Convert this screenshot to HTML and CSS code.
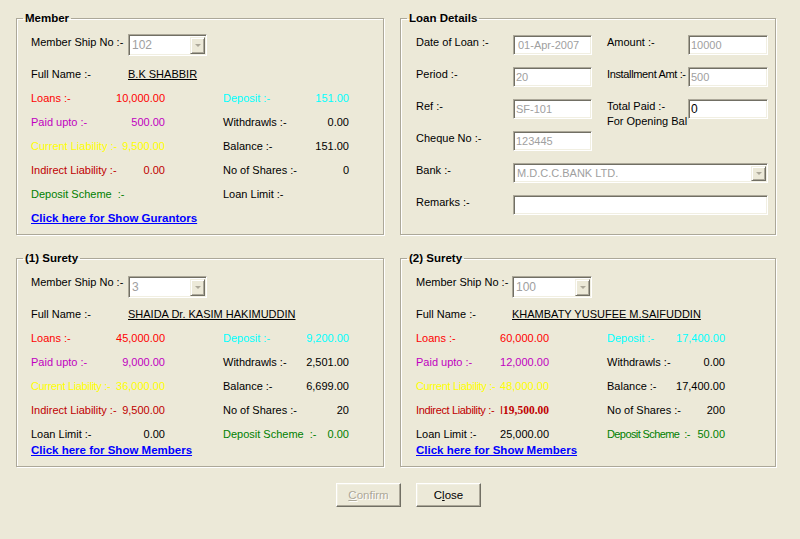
FILE: index.html
```html
<!DOCTYPE html>
<html>
<head>
<meta charset="utf-8">
<title>Loan Details</title>
<link rel="stylesheet" href="styles.css">
</head>
<body>
<div class="form">
  <div class="panels">
    <fieldset class="group">
      <legend>Member</legend>
      <div class="body body-member">
        <div class="combo-row combo-row-member">
          <span class="lbl w97 up1">Member Ship No :-</span>
          <div class="combo w79"><span class="combo-text">102</span><span class="drop"><span class="arrow"></span></span></div>
        </div>
        <div class="name-row"><span class="lbl w97">Full Name :-</span><span class="name">B.K SHABBIR</span></div>
        <div class="data">
          <div class="pair p1 red"><span class="k">Loans :-</span><span class="v">10,000.00</span></div>
          <div class="pair p2 cyan"><span class="k">Deposit :-</span><span class="v">151.00</span></div>
        </div>
        <div class="data">
          <div class="pair p1 magenta"><span class="k">Paid upto :-</span><span class="v">500.00</span></div>
          <div class="pair p2"><span class="k">Withdrawls :-</span><span class="v">0.00</span></div>
        </div>
        <div class="data">
          <div class="pair p1 yellow"><span class="k">Current Liability :-</span><span class="v">9,500.00</span></div>
          <div class="pair p2"><span class="k">Balance :-</span><span class="v">151.00</span></div>
        </div>
        <div class="data">
          <div class="pair p1 darkred"><span class="k">Indirect Liability :-</span><span class="v">0.00</span></div>
          <div class="pair p2"><span class="k">No of Shares :-</span><span class="v">0</span></div>
        </div>
        <div class="data">
          <div class="pair p1 green"><span class="k">Deposit Scheme  :-</span><span class="v"></span></div>
          <div class="pair p2"><span class="k">Loan Limit :-</span><span class="v"></span></div>
        </div>
        <a class="link link-member" href="#">Click here for Show Gurantors</a>
      </div>
    </fieldset>

    <fieldset class="group">
      <legend>Loan Details</legend>
      <div class="body body-loan">
        <span class="lbl c1 r1">Date of Loan :-</span>
        <div class="tb c2 r1 pad3">01-Apr-2007</div>
        <span class="lbl c4 r1">Amount :-</span>
        <div class="tb c5 r1">10000</div>

        <span class="lbl c1 r2">Period :-</span>
        <div class="tb c2 r2">20</div>
        <span class="lbl c4 r2 tight">Installment Amt :-</span>
        <div class="tb c5 r2">500</div>

        <span class="lbl c1 r3">Ref :-</span>
        <div class="tb c2 r3">SF-101</div>
        <span class="lbl c4 r3 two">Total Paid :-<br>For Opening Bal</span>
        <div class="tb c5 r3 enabled">0</div>

        <span class="lbl c1 r4">Cheque No :-</span>
        <div class="tb c2 r4">123445</div>

        <span class="lbl c1 r5">Bank :-</span>
        <div class="combo wide r5"><span class="combo-text">M.D.C.C.BANK LTD.</span><span class="drop"><span class="arrow"></span></span></div>

        <span class="lbl c1 r6">Remarks :-</span>
        <div class="tb wide r6 enabled"></div>
      </div>
    </fieldset>

    <fieldset class="group">
      <legend>(1) Surety</legend>
      <div class="body body-surety">
        <div class="combo-row combo-row-surety">
          <span class="lbl w97 upm1">Member Ship No :-</span>
          <div class="combo w79"><span class="combo-text">3</span><span class="drop"><span class="arrow"></span></span></div>
        </div>
        <div class="name-row"><span class="lbl w97">Full Name :-</span><span class="name">SHAIDA Dr. KASIM HAKIMUDDIN</span></div>
        <div class="data">
          <div class="pair p1 red"><span class="k">Loans :-</span><span class="v">45,000.00</span></div>
          <div class="pair p2 cyan"><span class="k">Deposit :-</span><span class="v">9,200.00</span></div>
        </div>
        <div class="data">
          <div class="pair p1 magenta"><span class="k">Paid upto :-</span><span class="v">9,000.00</span></div>
          <div class="pair p2"><span class="k">Withdrawls :-</span><span class="v">2,501.00</span></div>
        </div>
        <div class="data">
          <div class="pair p1 yellow"><span class="k tight">Current Liability :-</span><span class="v">36,000.00</span></div>
          <div class="pair p2"><span class="k">Balance :-</span><span class="v">6,699.00</span></div>
        </div>
        <div class="data">
          <div class="pair p1 darkred"><span class="k">Indirect Liability :-</span><span class="v">9,500.00</span></div>
          <div class="pair p2"><span class="k">No of Shares :-</span><span class="v">20</span></div>
        </div>
        <div class="data">
          <div class="pair p1"><span class="k">Loan Limit :-</span><span class="v">0.00</span></div>
          <div class="pair p2 green"><span class="k">Deposit Scheme  :-</span><span class="v">0.00</span></div>
        </div>
        <a class="link link-surety" href="#">Click here for Show Members</a>
      </div>
    </fieldset>

    <fieldset class="group">
      <legend>(2) Surety</legend>
      <div class="body body-surety s2">
        <div class="combo-row combo-row-surety">
          <span class="lbl w96 upm1">Member Ship No :-</span>
          <div class="combo w80"><span class="combo-text">100</span><span class="drop"><span class="arrow"></span></span></div>
        </div>
        <div class="name-row"><span class="lbl w96">Full Name :-</span><span class="name">KHAMBATY YUSUFEE M.SAIFUDDIN</span></div>
        <div class="data">
          <div class="pair p1 red"><span class="k">Loans :-</span><span class="v">60,000.00</span></div>
          <div class="pair p2 cyan"><span class="k">Deposit :-</span><span class="v">17,400.00</span></div>
        </div>
        <div class="data">
          <div class="pair p1 magenta"><span class="k">Paid upto :-</span><span class="v">12,000.00</span></div>
          <div class="pair p2"><span class="k">Withdrawls :-</span><span class="v">0.00</span></div>
        </div>
        <div class="data">
          <div class="pair p1 yellow"><span class="k tight">Current Liability :-</span><span class="v">48,000.00</span></div>
          <div class="pair p2"><span class="k">Balance :-</span><span class="v">17,400.00</span></div>
        </div>
        <div class="data">
          <div class="pair p1 darkred"><span class="k tight">Indirect Liability :-</span><span class="v">I<span class="serifb">19,500.00</span></span></div>
          <div class="pair p2"><span class="k">No of Shares :-</span><span class="v">200</span></div>
        </div>
        <div class="data">
          <div class="pair p1"><span class="k">Loan Limit :-</span><span class="v">25,000.00</span></div>
          <div class="pair p2 green"><span class="k tighter">Deposit Scheme  :-</span><span class="v">50.00</span></div>
        </div>
        <a class="link link-surety" href="#">Click here for Show Members</a>
      </div>
    </fieldset>
  </div>

  <div class="buttons">
    <button class="btn disabled" type="button"><u>C</u>onfirm</button>
    <button class="btn" type="button">C<u>l</u>ose</button>
  </div>
</div>
</body>
</html>
```

FILE: styles.css
```css
html, body {
  margin: 0;
  padding: 0;
}

body {
  width: 800px;
  height: 539px;
  overflow: hidden;
  background: #ECE9D8;
  font-family: "Liberation Sans", Arial, sans-serif;
  font-size: 11px;
  color: #000;
}

.form {
  padding: 12px 0 0 16px;
}

.panels {
  display: grid;
  grid-template-columns: 368px 376px;
  grid-template-rows: 223px 215px;
  column-gap: 16px;
  row-gap: 17px;
}

.group {
  margin: 0;
  padding: 0;
  min-width: 0;
  border: 1px solid #ACA899;
  box-shadow: inset 1px 1px 0 #FFFFFF, 1px 1px 0 #FFFFFF;
  box-sizing: border-box;
}

.group legend {
  margin-left: 6px;
  padding: 0 2px;
  font-weight: bold;
  font-size: 11.5px;
  line-height: 12px;
  color: #000;
}

.body {
  padding-left: 14px;
}

.body-member {
  padding-top: 10px;
}

.body-surety {
  padding-top: 12px;
}

.s2 {
  padding-left: 15px;
}

.lbl {
  white-space: pre;
  line-height: 14px;
}

.w97 { width: 97px; flex: none; }
.w96 { width: 96px; flex: none; }

.combo-row {
  display: flex;
  align-items: flex-start;
}

.combo-row-member { height: 28px; }
.combo-row-surety { height: 26px; }

.up1 { margin-top: 1px; }
.upm1 { margin-top: -1px; }

.combo {
  box-sizing: border-box;
  height: 22px;
  display: flex;
  align-items: stretch;
  border: 1px solid;
  border-color: #ACA899 #FFFFFF #FFFFFF #ACA899;
  box-shadow: inset 1px 1px 0 #716F64, inset -1px -1px 0 #F1EFE2;
  background: #FFFFFF;
  padding: 2px 1px 1px 2px;
}

.w79 { width: 79px; }
.w80 { width: 80px; }

.combo-text {
  flex: 1;
  color: #A0A0A0;
  font-size: 12px;
  line-height: 17px;
  padding-left: 1px;
  white-space: nowrap;
  overflow: hidden;
}

.drop {
  flex: none;
  width: 15px;
  box-sizing: border-box;
  background: #ECE9D8;
  border: 1px solid;
  border-color: #F1EFE2 #716F64 #716F64 #F1EFE2;
  box-shadow: inset 1px 1px 0 #FFFFFF, inset -1px -1px 0 #ACA899;
  display: flex;
  align-items: center;
  justify-content: center;
}

.arrow {
  width: 0;
  height: 0;
  border-left: 3px solid transparent;
  border-right: 3px solid transparent;
  border-top: 3px solid #ACA899;
}

.name-row {
  display: flex;
  height: 24px;
  line-height: 24px;
}

.name-row .lbl {
  line-height: 24px;
}

.name {
  text-decoration: underline;
  white-space: nowrap;
}

.data {
  display: flex;
  height: 24px;
  line-height: 24px;
}

.pair {
  display: grid;
  flex: none;
}

.pair .k,
.pair .v {
  grid-area: 1 / 1;
  white-space: pre;
}

.pair .v {
  justify-self: end;
}

.p1 { width: 134px; margin-right: 58px; }
.p2 { width: 126px; }

.s2 .p1 { width: 133px; }
.s2 .p2 { width: 118px; }

.red { color: #FF0000; }
.cyan { color: #00FFFF; }
.magenta { color: #C000C0; }
.yellow { color: #FFFF00; }
.darkred { color: #C00000; }
.green { color: #008000; }

.serifb {
  font-family: "Liberation Serif", "Times New Roman", serif;
  font-weight: bold;
  font-size: 11.5px;
}

.link {
  display: block;
  color: #0000FF;
  font-weight: bold;
  font-size: 11.5px;
  text-decoration: underline;
  white-space: nowrap;
  width: max-content;
}

.link-member {
  line-height: 24px;
}

.link-surety {
  line-height: 16px;
  margin-top: -4px;
}

/* Loan details */
.body-loan {
  padding: 11px 7px 0 15px;
  display: grid;
  grid-template-columns: 97px 79px 15px 81px 80px;
  grid-auto-rows: 20px;
  row-gap: 12px;
}

.c1 { grid-column: 1; }
.c2 { grid-column: 2; }
.c4 { grid-column: 4; }
.c5 { grid-column: 5; }
.wide { grid-column: 2 / 6; }

.r1 { grid-row: 1; }
.r2 { grid-row: 2; }
.r3 { grid-row: 3; }
.r4 { grid-row: 4; }
.r5 { grid-row: 5; }
.r6 { grid-row: 6; }

.body-loan .lbl {
  align-self: start;
  z-index: 0;
}

.two {
  line-height: 15px !important;
}

.tight {
  letter-spacing: -0.35px;
}

.tighter {
  letter-spacing: -0.6px;
}

.tb {
  box-sizing: border-box;
  height: 20px;
  border: 1px solid;
  border-color: #ACA899 #FFFFFF #FFFFFF #ACA899;
  box-shadow: inset 1px 1px 0 #716F64, inset -1px -1px 0 #F1EFE2;
  background: #FFFFFF;
  color: #A0A0A0;
  font-size: 11px;
  line-height: 18px;
  padding-left: 2px;
  white-space: nowrap;
  overflow: hidden;
  z-index: 1;
}

.body-loan .combo {
  height: 20px;
  padding: 2px 1px 1px 2px;
}

.body-loan .combo .combo-text {
  font-size: 11px;
  line-height: 15px;
  padding-left: 1px;
}

.pad3 {
  padding-left: 4px;
}

.tb.enabled {
  color: #000;
  font-size: 12px;
}

/* Buttons */
.buttons {
  display: flex;
  gap: 15px;
  margin-top: 16px;
  padding-left: 320px;
}

.btn {
  box-sizing: border-box;
  width: 65px;
  height: 24px;
  margin: 0;
  padding: 0;
  background: #ECE9D8;
  border: 1px solid;
  border-color: #FFFFFF #716F64 #716F64 #FFFFFF;
  box-shadow: inset -1px -1px 0 #ACA899, inset 1px 1px 0 #F1EFE2;
  font-family: "Liberation Sans", Arial, sans-serif;
  font-size: 11.5px;
  color: #000;
  border-radius: 0;
}

.btn.disabled {
  color: #ACA899;
  text-shadow: 1px 1px 0 #FFFFFF;
}
```
